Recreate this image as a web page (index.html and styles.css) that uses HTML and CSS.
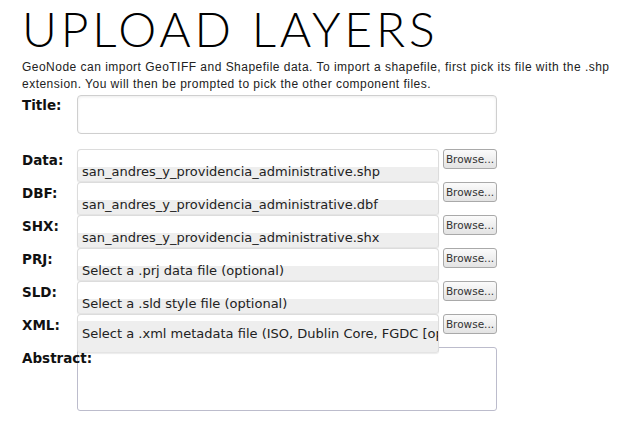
FILE: index.html
```html
<!DOCTYPE html>
<html>
<head>
<meta charset="utf-8">
<link rel="stylesheet" href="styles.css">
</head>
<body>
<div class="page">
  <h1 class="heading">UPLOAD LAYERS</h1>
  <p class="intro">GeoNode can import GeoTIFF and Shapefile data. To import a shapefile, first pick its file with the .shp extension. You will then be prompted to pick the other component files.</p>
  <form class="form">
    <div class="row title-row">
      <label class="lbl">Title:</label>
      <div class="text-input"></div>
    </div>
    <div class="files">
      <div class="row file-row">
        <label class="lbl">Data:</label>
        <div class="file-box">san_andres_y_providencia_administrative.shp</div>
        <button class="browse" type="button">Browse...</button>
      </div>
      <div class="row file-row">
        <label class="lbl">DBF:</label>
        <div class="file-box">san_andres_y_providencia_administrative.dbf</div>
        <button class="browse" type="button">Browse...</button>
      </div>
      <div class="row file-row">
        <label class="lbl">SHX:</label>
        <div class="file-box">san_andres_y_providencia_administrative.shx</div>
        <button class="browse" type="button">Browse...</button>
      </div>
      <div class="row file-row">
        <label class="lbl">PRJ:</label>
        <div class="file-box">Select a .prj data file (optional)</div>
        <button class="browse" type="button">Browse...</button>
      </div>
      <div class="row file-row">
        <label class="lbl">SLD:</label>
        <div class="file-box">Select a .sld style file (optional)</div>
        <button class="browse" type="button">Browse...</button>
      </div>
      <div class="row file-row last">
        <label class="lbl">XML:</label>
        <div class="file-box">Select a .xml metadata file (ISO, Dublin Core, FGDC [optional])</div>
        <button class="browse" type="button">Browse...</button>
      </div>
    </div>
    <div class="row abstract-row">
      <label class="lbl over">Abstract:</label>
      <div class="textarea"></div>
    </div>
  </form>
</div>
</body>
</html>
```

FILE: styles.css
```css
html, body {
  margin: 0;
  padding: 0;
  background: #fff;
}

.page {
  padding-left: 22px;
}

.heading {
  margin: 0;
  padding-top: 5px;
  font-family: Lato, "Open Sans", sans-serif;
  font-weight: 300;
  font-size: 48px;
  line-height: 48px;
  letter-spacing: 3.8px;
  color: #000;
}

.intro {
  margin: 6px 0 0 0;
  width: 600px;
  font-family: "Liberation Sans", Arial, sans-serif;
  font-size: 12px;
  line-height: 17px;
  letter-spacing: 0.48px;
  color: #222;
}

.form {
  margin-top: 2px;
}

.row {
  display: flex;
  align-items: flex-start;
}

.lbl {
  flex: 0 0 55px;
  width: 55px;
  white-space: nowrap;
  font-family: "DejaVu Sans", Verdana, sans-serif;
  font-weight: bold;
  font-size: 13.5px;
  line-height: 16px;
  color: #111;
  padding-top: 3px;
}

.title-row .lbl {
  padding-top: 2px;
}

.over {
  position: relative;
  z-index: 3;
}

.text-input {
  width: 420px;
  height: 39px;
  box-sizing: border-box;
  border: 1px solid #cfcfcf;
  border-radius: 4px;
  box-shadow: inset 0 1px 3px rgba(0, 0, 0, 0.08);
  background: #fff;
}

.files {
  margin-top: 15px;
}

.file-row {
  height: 33px;
}

.file-box {
  position: relative;
  z-index: 2;
  width: 362px;
  height: 33px;
  box-sizing: border-box;
  border: 1px solid #dcdcdc;
  border-bottom-color: #e4e4e4;
  border-radius: 4px 4px 3px 3px;
  background: linear-gradient(#ffffff 0, #ffffff 17px, #eeeeee 17px, #eeeeee 100%);
  box-shadow: 0 1px 1px rgba(0, 0, 0, 0.08);
  padding: 13px 0 0 4px;
  font-family: "DejaVu Sans", Verdana, sans-serif;
  font-size: 13px;
  line-height: 18px;
  color: #222;
  white-space: nowrap;
  overflow: hidden;
}

.file-row.last .file-box {
  height: 39px;
  background: linear-gradient(#ffffff 0, #ffffff 6px, #eeeeee 6px, #eeeeee 100%);
  padding-top: 10px;
}

.browse {
  margin: 0 0 0 4px;
  width: 54px;
  height: 20px;
  box-sizing: border-box;
  padding: 0;
  border: 1px solid #a9a9a9;
  border-radius: 3px;
  background: linear-gradient(#fbfbfb, #e3e3e3);
  font-family: "DejaVu Sans", Tahoma, sans-serif;
  font-size: 10.5px;
  line-height: 16px;
  color: #333;
  text-align: center;
}

.textarea {
  width: 420px;
  height: 64px;
  box-sizing: border-box;
  border: 1px solid #bcbccc;
  border-radius: 3px;
  background: #fff;
}

.abstract-row .lbl {
  padding-top: 3px;
}
```
